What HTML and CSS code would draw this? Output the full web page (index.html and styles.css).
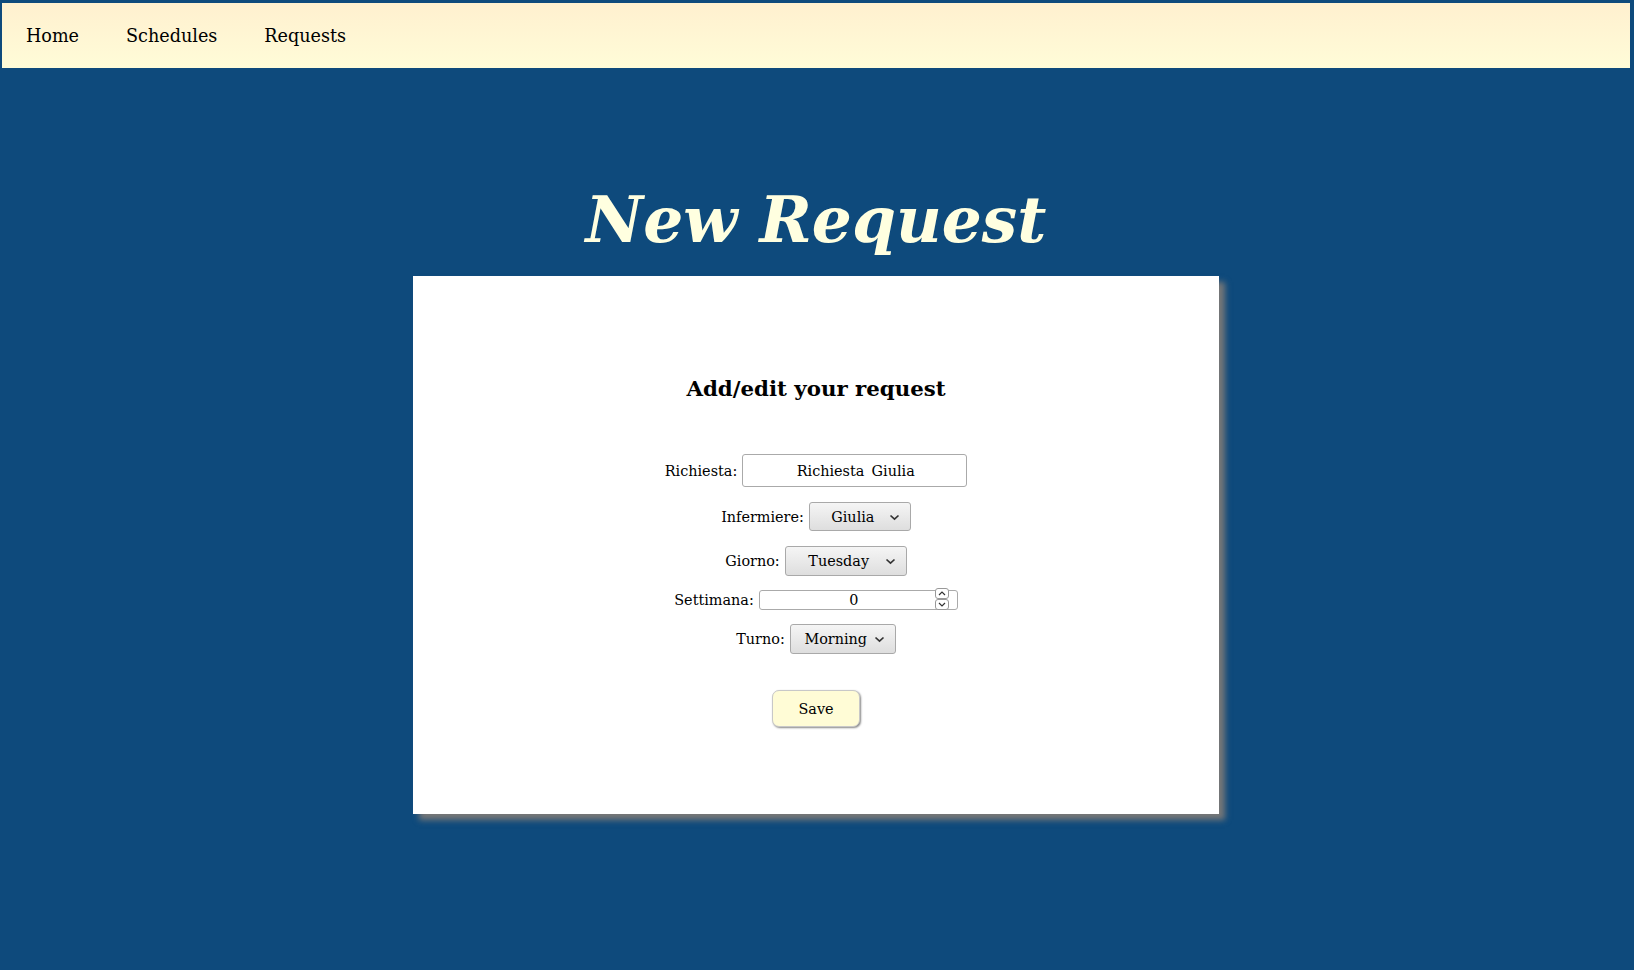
FILE: index.html
```html
<!DOCTYPE html>
<html lang="en">
<head>
<meta charset="utf-8">
<title>New Request</title>
<link rel="stylesheet" href="styles.css">
</head>
<body>
<nav class="nav">
  <a class="nav-link" href="#">Home</a>
  <a class="nav-link" href="#">Schedules</a>
  <a class="nav-link" href="#">Requests</a>
</nav>
<h1 class="title">New Request</h1>
<main class="card">
  <h2 class="card-heading">Add/edit your request</h2>
  <form class="form">
    <div class="row row-text">
      <label class="label" for="richiesta">Richiesta:</label>
      <input class="text-input" id="richiesta" type="text" value="Richiesta_Giulia">
    </div>
    <div class="row row-nurse">
      <label class="label" for="inf">Infermiere:</label>
      <span class="select-wrap select-nurse">
        <select class="select" id="inf"><option>Giulia</option></select>
        <svg class="chev" width="11" height="7" viewBox="0 0 11 7"><path d="M1.5 1.5 L5.5 5.2 L9.5 1.5" fill="none" stroke="#333" stroke-width="1.7"/></svg>
      </span>
    </div>
    <div class="row row-day">
      <label class="label" for="giorno">Giorno:</label>
      <span class="select-wrap select-day">
        <select class="select" id="giorno"><option>Tuesday</option></select>
        <svg class="chev" width="11" height="7" viewBox="0 0 11 7"><path d="M1.5 1.5 L5.5 5.2 L9.5 1.5" fill="none" stroke="#333" stroke-width="1.7"/></svg>
      </span>
    </div>
    <div class="row row-week">
      <label class="label" for="sett">Settimana:</label>
      <span class="num-wrap">
        <input class="num-input" id="sett" type="number" value="0">
        <span class="spin">
          <span class="spin-btn"><svg width="8" height="5" viewBox="0 0 8 5"><path d="M1 4 L4 1 L7 4" fill="none" stroke="#333" stroke-width="1.2"/></svg></span>
          <span class="spin-btn"><svg width="8" height="5" viewBox="0 0 8 5"><path d="M1 1 L4 4 L7 1" fill="none" stroke="#333" stroke-width="1.2"/></svg></span>
        </span>
      </span>
    </div>
    <div class="row row-shift">
      <label class="label" for="turno">Turno:</label>
      <span class="select-wrap select-shift">
        <select class="select" id="turno"><option>Morning</option></select>
        <svg class="chev" width="11" height="7" viewBox="0 0 11 7"><path d="M1.5 1.5 L5.5 5.2 L9.5 1.5" fill="none" stroke="#333" stroke-width="1.7"/></svg>
      </span>
    </div>
    <div class="row row-save">
      <button class="save" type="button">Save</button>
    </div>
  </form>
</main>
</body>
</html>
```

FILE: styles.css
```css
html, body {
  margin: 0;
}
body {
  padding: 3px 4px 0 2px;
  background: #0e4a7c;
  font-family: "DejaVu Serif", serif;
  color: #000;
  min-height: 967px;
  box-sizing: border-box;
}
.nav {
  display: flex;
  align-items: center;
  height: 65px;
  background: linear-gradient(#fff0cf, #fffcd8);
}
.nav-link {
  padding: 0 23px 0 24px;
  font-size: 17.6px;
  color: #000;
  text-decoration: none;
  line-height: 22px;
  margin-top: 1px;
}
.title {
  margin: 116px 0 20px;
  text-align: center;
  font-size: 63px;
  line-height: 72px;
  font-style: italic;
  font-weight: bold;
  color: #ffffe0;
}
.card {
  width: 806px;
  height: 538px;
  box-sizing: border-box;
  margin: 0 auto;
  padding-top: 100px;
  background: #fff;
  box-shadow: 6px 6px 6px #777;
}
.card-heading {
  margin: 0;
  text-align: center;
  font-size: 21.3px;
  line-height: 26px;
  font-weight: bold;
  color: #000;
}
.form {
  display: flex;
  flex-direction: column;
  align-items: center;
  margin-top: 52px;
  gap: 14px;
}
.row {
  display: flex;
  align-items: center;
  gap: 5px;
  font-size: 14.4px;
}
.row-nurse, .row-day {
  margin-top: 1px;
}
.row-save {
  margin-top: 22px;
}
.label {
  color: #000;
}
.text-input {
  width: 225px;
  height: 33px;
  box-sizing: border-box;
  border: 1px solid #aaa;
  border-radius: 3px;
  font: 14.4px "DejaVu Serif", serif;
  line-height: 20px;
  text-align: center;
  color: #000;
  padding: 0 0 0 2px;
}
.select-wrap {
  position: relative;
  display: inline-block;
}
.select {
  appearance: none;
  -webkit-appearance: none;
  box-sizing: border-box;
  border: 1px solid #a9a9a9;
  border-radius: 3px;
  background: linear-gradient(#f5f5f5, #dedede);
  font: 14.4px "DejaVu Serif", serif;
  color: #000;
  text-align-last: center;
  padding: 0 22px 0 8px;
  display: block;
}
.select-nurse .select { width: 102px; height: 29px; }
.select-day .select { width: 122px; height: 30px; }
.select-shift .select { width: 106px; height: 30px; }
.chev {
  position: absolute;
  right: 11px;
  top: 50%;
  margin-top: -3px;
  pointer-events: none;
}
.num-wrap {
  position: relative;
  display: inline-block;
  width: 199px;
  height: 20px;
  box-sizing: border-box;
  border: 1px solid #aaa;
  border-radius: 3px;
}
.num-input {
  -moz-appearance: textfield;
  display: block;
  width: 176px;
  height: 18px;
  box-sizing: border-box;
  border: 0;
  padding: 0 0 0 12px;
  background: transparent;
  font: 14.4px "DejaVu Serif", serif;
  color: #000;
  text-align: center;
  outline: none;
}
.num-input::-webkit-inner-spin-button,
.num-input::-webkit-outer-spin-button {
  -webkit-appearance: none;
  margin: 0;
}
.spin {
  position: absolute;
  left: 175px;
  top: -3px;
  width: 14px;
  display: flex;
  flex-direction: column;
}
.spin-btn {
  height: 11px;
  box-sizing: border-box;
  border: 1px solid #999;
  border-radius: 3px;
  background: #fff;
  display: flex;
  align-items: center;
  justify-content: center;
}
.save {
  width: 88px;
  height: 37px;
  box-sizing: border-box;
  border: 1px solid #c8c8c8;
  border-radius: 7px;
  background: #fffcd6;
  box-shadow: 1px 1px 2px #888;
  font: 14.4px "DejaVu Serif", serif;
  color: #000;
  cursor: pointer;
}
```
